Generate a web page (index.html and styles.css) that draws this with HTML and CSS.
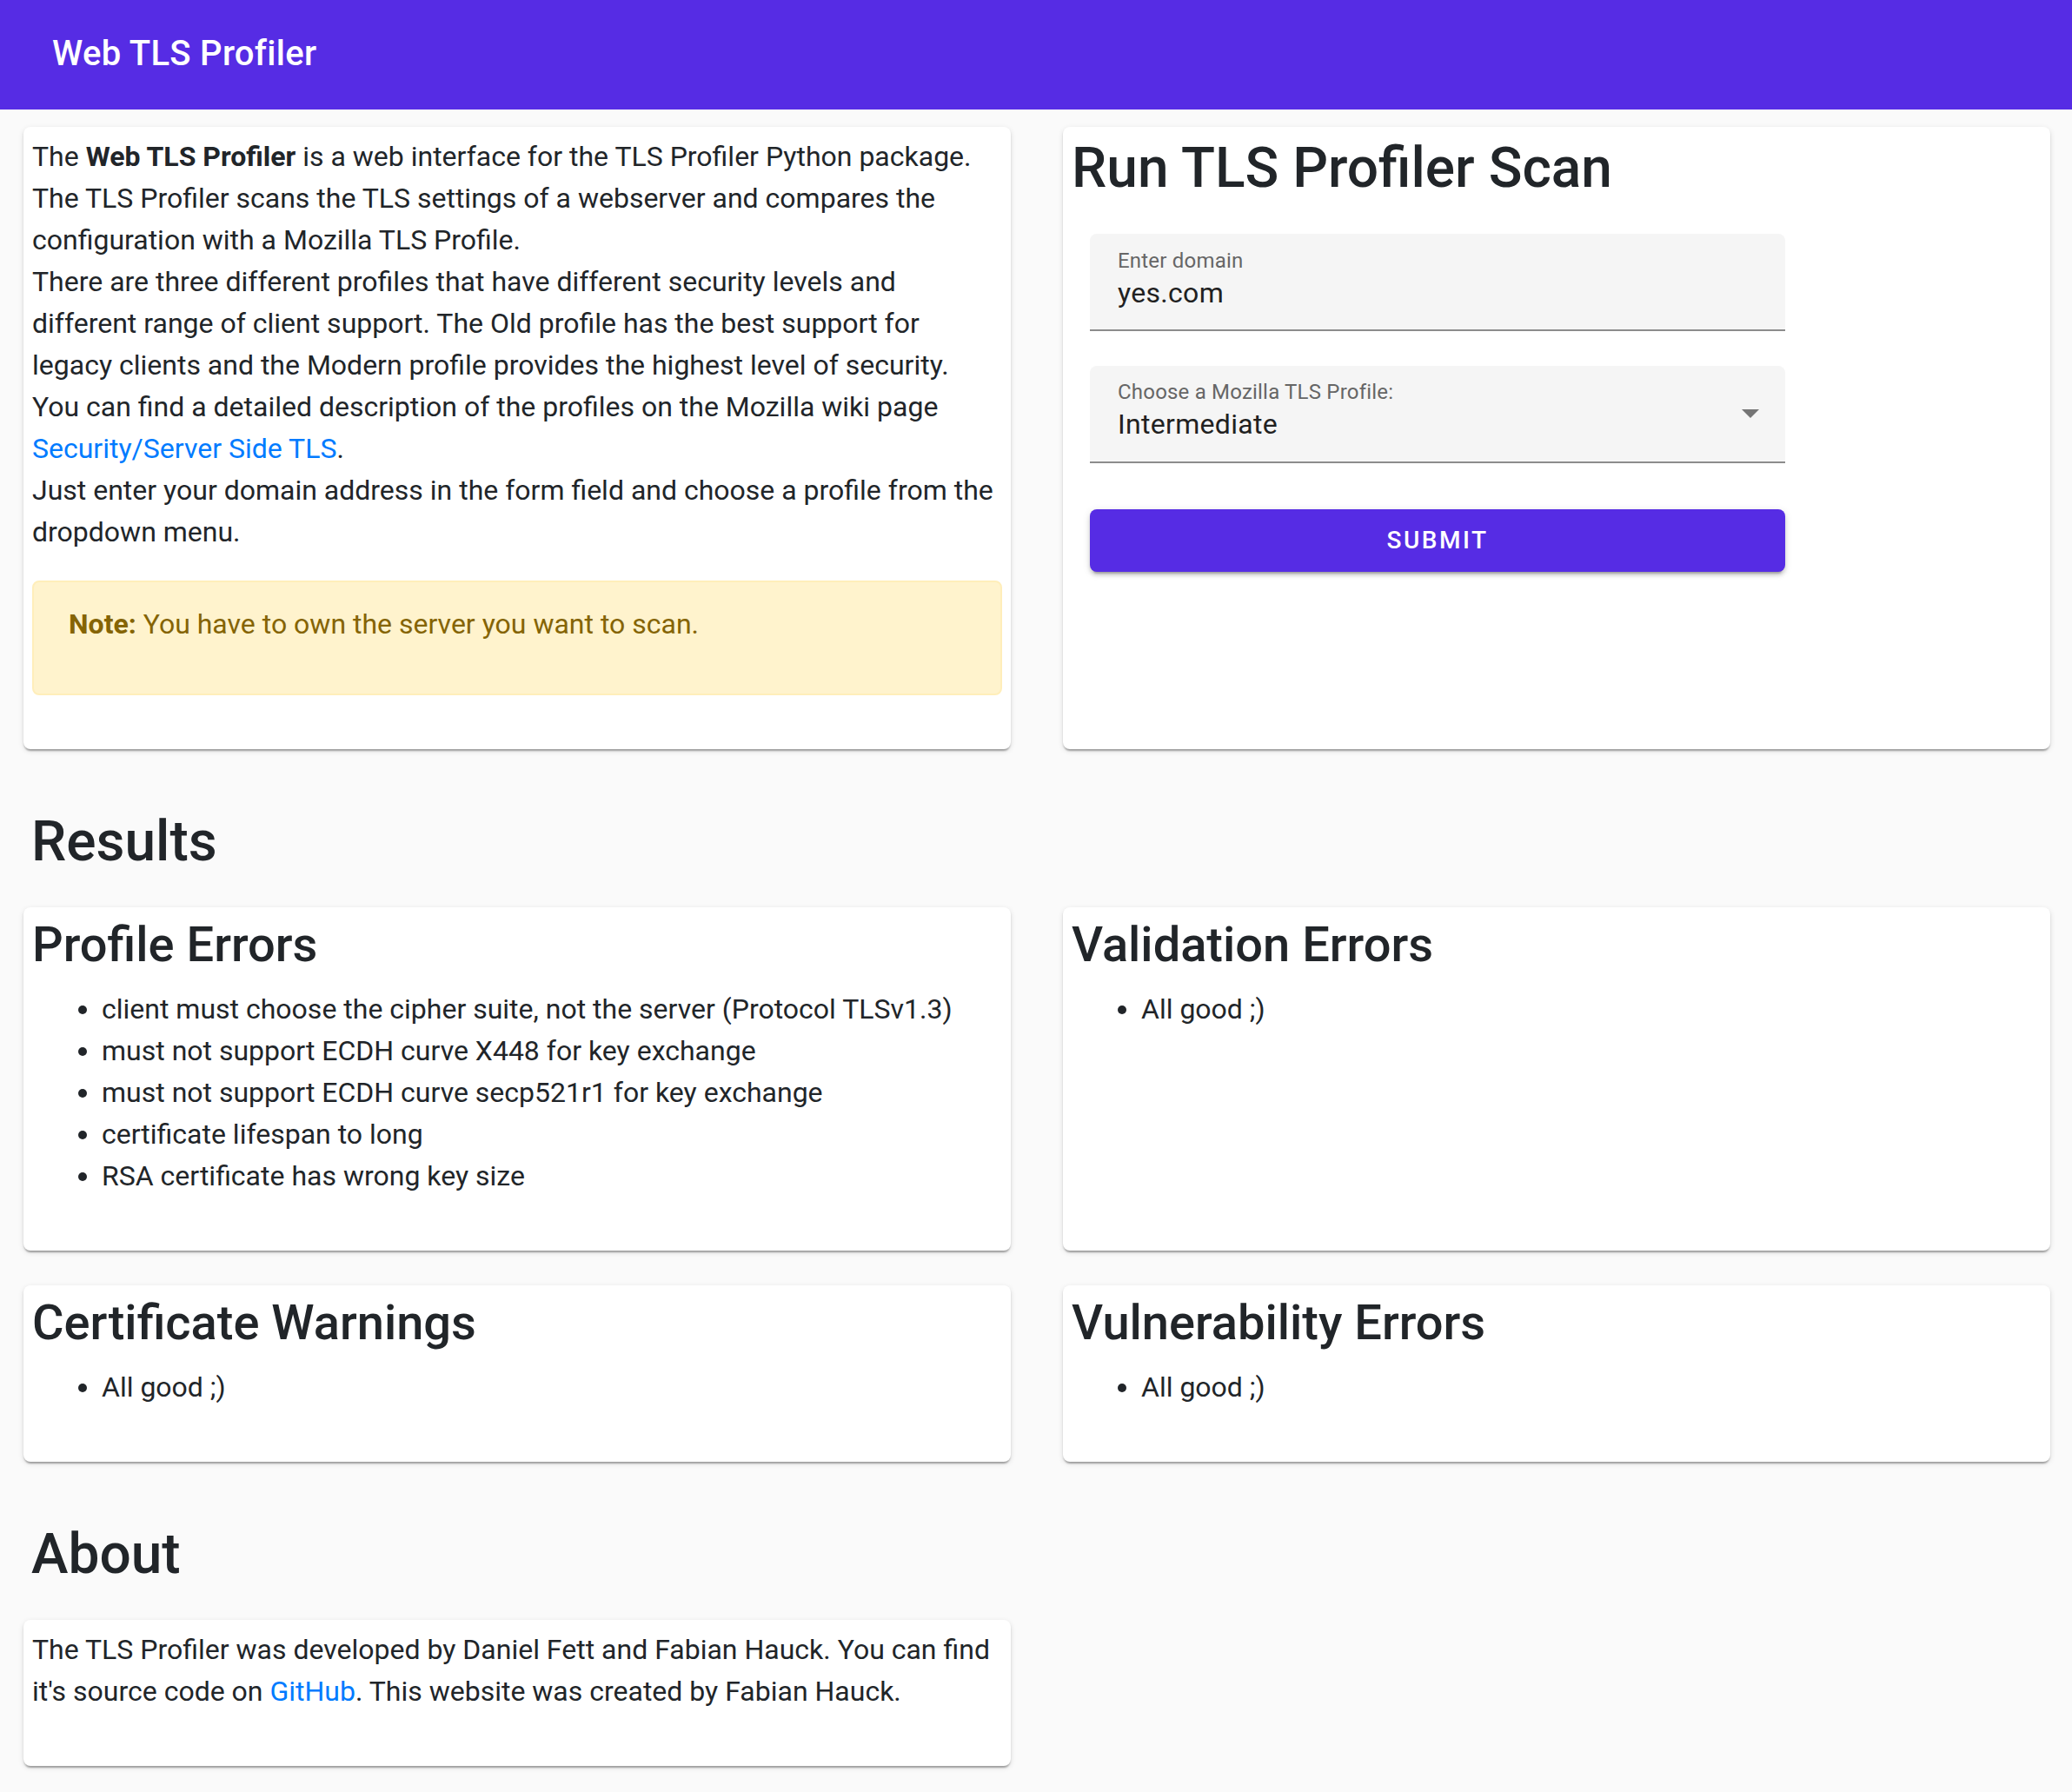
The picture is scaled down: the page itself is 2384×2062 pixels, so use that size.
FILE: index.html
```html
<!DOCTYPE html>
<html lang="en">
<head>
<meta charset="utf-8">
<title>Web TLS Profiler</title>
<link rel="stylesheet" href="styles.css">
</head>
<body>
<header class="topbar">
  <span class="topbar-title">Web TLS Profiler</span>
</header>
<main class="container">
  <div class="row">
    <section class="card card-intro">
      <p class="text">The <strong>Web TLS Profiler</strong> is a web interface for the TLS Profiler Python package.<br>The TLS Profiler scans the TLS settings of a webserver and compares the configuration with a Mozilla TLS Profile.<br>There are three different profiles that have different security levels and different range of client support. The Old profile has the best support for legacy clients and the Modern profile provides the highest level of security.<br>You can find a detailed description of the profiles on the Mozilla wiki page <a href="#" class="link">Security/Server Side TLS</a>.<br>Just enter your domain address in the form field and choose a profile from the dropdown menu.</p>
      <div class="alert">
        <p class="alert-text"><strong>Note:</strong> You have to own the server you want to scan.</p>
      </div>
    </section>
    <section class="card">
      <h2 class="h2">Run TLS Profiler Scan</h2>
      <form class="scan-form">
        <div class="field">
          <div class="field-body">
            <span class="field-label">Enter domain</span>
            <span class="field-value">yes.com</span>
          </div>
        </div>
        <div class="field field-select">
          <div class="field-body">
            <span class="field-label">Choose a Mozilla TLS Profile:</span>
            <span class="field-value">Intermediate</span>
          </div>
          <svg class="select-arrow" width="20" height="10" viewBox="0 0 20 10"><polygon points="0,0 20,0 10,10" fill="#757575"/></svg>
        </div>
        <button type="button" class="btn">Submit</button>
      </form>
    </section>
  </div>

  <h2 class="h2 section-title">Results</h2>
  <div class="row">
    <section class="card">
      <h3 class="h3">Profile Errors</h3>
      <ul class="list">
        <li>client must choose the cipher suite, not the server (Protocol TLSv1.3)</li>
        <li>must not support ECDH curve X448 for key exchange</li>
        <li>must not support ECDH curve secp521r1 for key exchange</li>
        <li>certificate lifespan to long</li>
        <li>RSA certificate has wrong key size</li>
      </ul>
    </section>
    <section class="card">
      <h3 class="h3">Validation Errors</h3>
      <ul class="list">
        <li>All good ;)</li>
      </ul>
    </section>
  </div>
  <div class="row">
    <section class="card">
      <h3 class="h3">Certificate Warnings</h3>
      <ul class="list">
        <li>All good ;)</li>
      </ul>
    </section>
    <section class="card">
      <h3 class="h3">Vulnerability Errors</h3>
      <ul class="list">
        <li>All good ;)</li>
      </ul>
    </section>
  </div>

  <h2 class="h2 section-title">About</h2>
  <div class="row">
    <section class="card">
      <p class="text">The TLS Profiler was developed by Daniel Fett and Fabian Hauck. You can find it's source code on <a href="#" class="link">GitHub</a>. This website was created by Fabian Hauck.</p>
    </section>
  </div>
</main>
</body>
</html>
```

FILE: styles.css
```css
* { box-sizing: border-box; }

html, body {
  margin: 0;
  padding: 0;
}

body {
  background: #fafafa;
  font-family: Roboto, "Liberation Sans", Arial, sans-serif;
  font-size: 32px;
  line-height: 1.5;
  color: #212529;
}

.topbar {
  height: 126px;
  background: #562ce4;
  display: flex;
  align-items: center;
  padding: 0 0 3px 60px;
}

.topbar-title {
  color: #ffffff;
  font-size: 40px;
  font-weight: 500;
  line-height: normal;
  letter-spacing: 0.3px;
}

.container {
  padding: 0 25px 0 27px;
}

.row {
  display: grid;
  grid-template-columns: 1fr 1fr;
  column-gap: 60px;
}

.card {
  background: #ffffff;
  border-radius: 8px;
  margin: 20px 0;
  padding: 10px 10px 30px;
  box-shadow: 0 4px 2px -2px rgba(0,0,0,0.2), 0 2px 2px 0 rgba(0,0,0,0.14), 0 2px 6px 0 rgba(0,0,0,0.12);
}

.text {
  margin: 0 0 32px;
}

.link {
  color: #007bff;
  text-decoration: none;
}

.alert {
  background: #fff3cd;
  border: 2px solid #ffeeba;
  border-radius: 8px;
  color: #856404;
  padding: 24px 40px;
  margin-bottom: 32px;
}

.alert-text {
  margin: 0 0 32px;
}

.h2 {
  font-size: 64px;
  font-weight: 500;
  line-height: 1.2;
  margin: 0 0 16px;
}

.section-title {
  margin-top: 49px;
  padding-left: 9px;
}

.h3 {
  font-size: 56px;
  font-weight: 500;
  line-height: 1.2;
  margin: 0 0 16px;
}

.list {
  margin: 0 0 32px;
  padding-left: 80px;
}

.scan-form {
  padding: 20px 21px;
}

.field {
  width: 800px;
  height: 112px;
  background: #f5f5f5;
  border-radius: 8px 8px 0 0;
  border-bottom: 2px solid #8c8c8c;
  display: flex;
  align-items: center;
}

.field + .field {
  margin-top: 40px;
}

.field-body {
  flex: 1;
  align-self: stretch;
  display: flex;
  flex-direction: column;
  padding: 19px 32px 0;
}

.field-select .field-body {
  padding-top: 18px;
}

.field-label {
  font-size: 24px;
  line-height: 24px;
  color: #666666;
  letter-spacing: 0.2px;
}

.field-value {
  font-size: 32px;
  line-height: 32px;
  margin-top: 9px;
  color: #212121;
  letter-spacing: 0.3px;
}

.select-arrow {
  display: block;
  margin-right: 30px;
}

.btn {
  display: block;
  width: 800px;
  height: 72px;
  margin-top: 53px;
  border: none;
  border-radius: 8px;
  background: #562ce4;
  color: #ffffff;
  font-family: Roboto, "Liberation Sans", Arial, sans-serif;
  font-size: 28px;
  font-weight: 500;
  letter-spacing: 2.5px;
  text-transform: uppercase;
  box-shadow: 0 6px 2px -4px rgba(0,0,0,0.2), 0 4px 4px 0 rgba(0,0,0,0.14), 0 2px 10px 0 rgba(0,0,0,0.12);
}
```
